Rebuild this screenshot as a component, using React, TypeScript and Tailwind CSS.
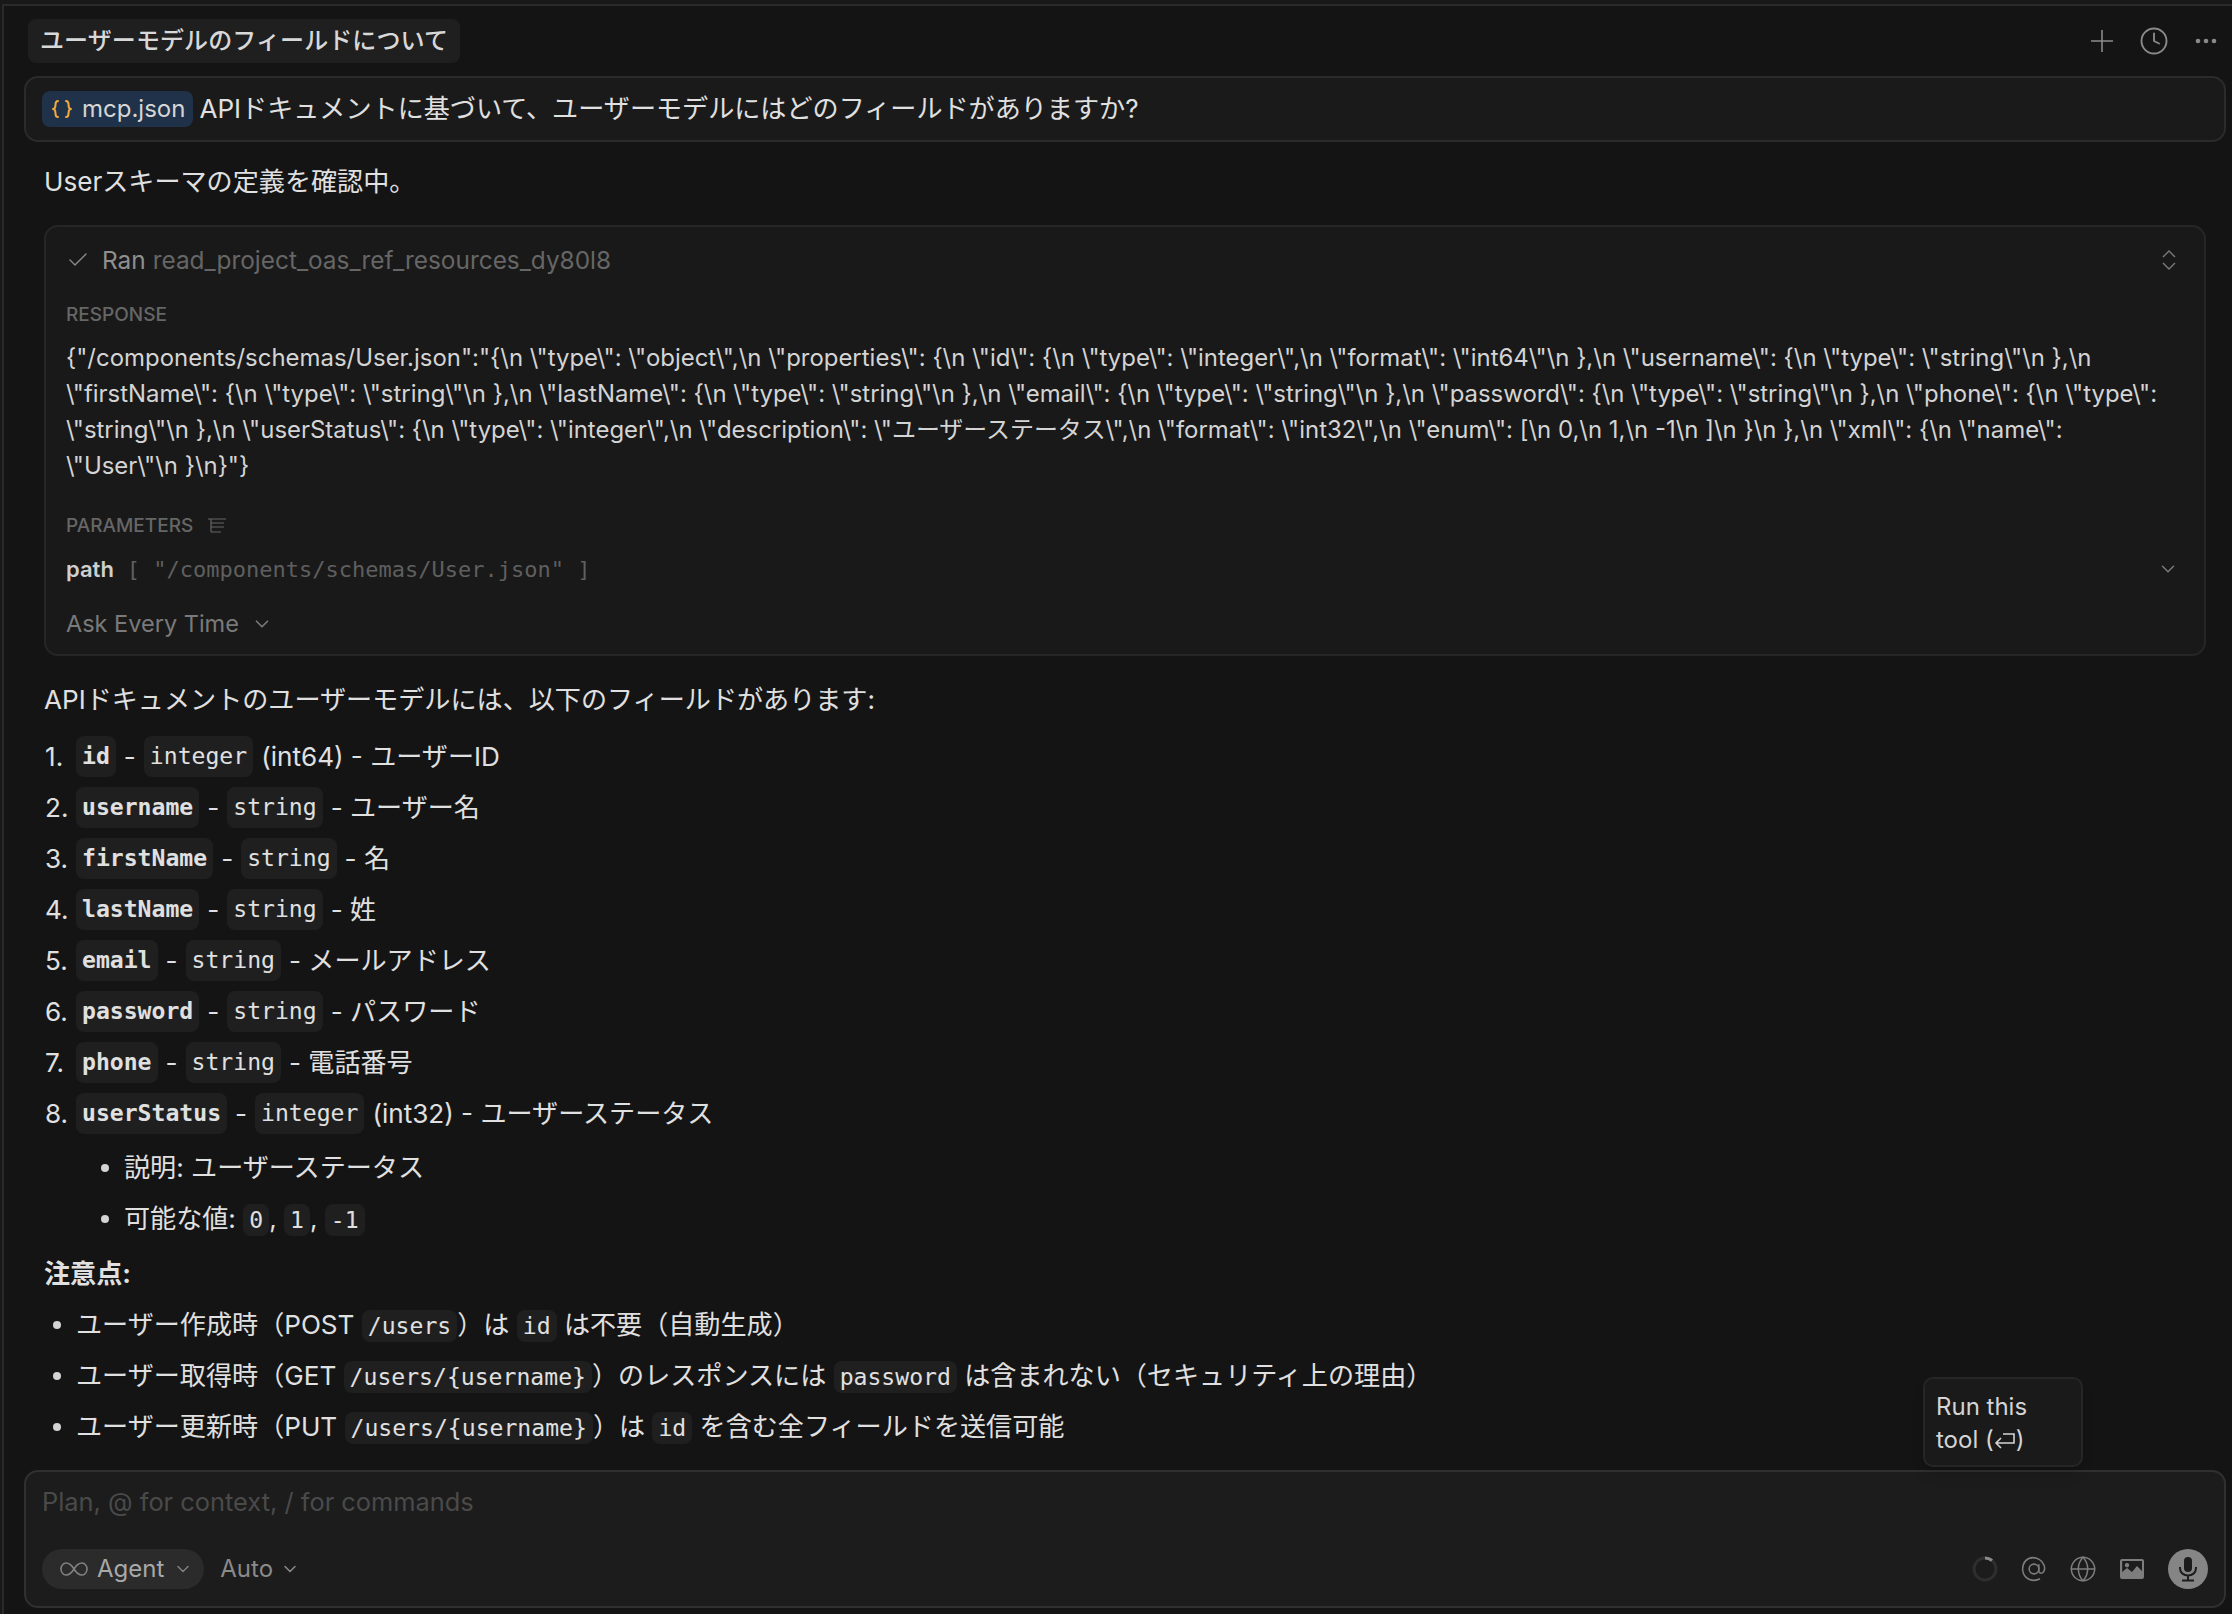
import { Check, ChevronDown, Clock, Globe } from 'lucide-react';
import type { ReactNode } from 'react';

const sans = 'font-["Inter","Noto_Sans_CJK_JP",sans-serif]';

const Code = ({ children, bold }: { children: ReactNode; bold?: boolean }) => (
  <code
    className={`rounded-lg bg-[#1f1f1f] px-[6px] py-[3px] font-["DejaVu_Sans_Mono",monospace] text-[23.1px] ${
      bold ? 'font-bold' : 'font-normal'
    }`}
  >
    {children}
  </code>
);

const fields = [
  { name: 'id', type: 'integer', rest: '(int64) - ユーザーID' },
  { name: 'username', type: 'string', rest: '- ユーザー名' },
  { name: 'firstName', type: 'string', rest: '- 名' },
  { name: 'lastName', type: 'string', rest: '- 姓' },
  { name: 'email', type: 'string', rest: '- メールアドレス' },
  { name: 'password', type: 'string', rest: '- パスワード' },
  { name: 'phone', type: 'string', rest: '- 電話番号' },
  { name: 'userStatus', type: 'integer', rest: '(int32) - ユーザーステータス' },
];

const responseText =
  '{"/components/schemas/User.json":"{\\n \\"type\\": \\"object\\",\\n \\"properties\\": {\\n \\"id\\": {\\n \\"type\\": \\"integer\\",\\n \\"format\\": \\"int64\\"\\n },\\n \\"username\\": {\\n \\"type\\": \\"string\\"\\n },\\n \\"firstName\\": {\\n \\"type\\": \\"string\\"\\n },\\n \\"lastName\\": {\\n \\"type\\": \\"string\\"\\n },\\n \\"email\\": {\\n \\"type\\": \\"string\\"\\n },\\n \\"password\\": {\\n \\"type\\": \\"string\\"\\n },\\n \\"phone\\": {\\n \\"type\\": \\"string\\"\\n },\\n \\"userStatus\\": {\\n \\"type\\": \\"integer\\",\\n \\"description\\": \\"ユーザーステータス\\",\\n \\"format\\": \\"int32\\",\\n \\"enum\\": [\\n 0,\\n 1,\\n -1\\n ]\\n }\\n },\\n \\"xml\\": {\\n \\"name\\": \\"User\\"\\n }\\n}"}';

const Bullet = ({ children }: { children: ReactNode }) => (
  <div className="flex h-[51px] items-center">
    <span className="ml-[9px] mr-[15px] h-[8px] w-[8px] rounded-full bg-[#d4d4d4]" />
    <span className="whitespace-pre">{children}</span>
  </div>
);

const App = () => {
  return (
    <div className={`relative h-[1614px] w-[2232px] overflow-hidden bg-[#181818] pl-[2px] pt-[4px] text-[26.1px] text-[#e0e0e0] ${sans}`}>
      <div className="flex h-[1610px] flex-col border-l-2 border-t-2 border-[#2a2a2a] bg-[#141414]">
        {/* top bar */}
        <div className="flex h-[70px] shrink-0 items-center justify-between pl-[24px] pr-[14px]">
          <div className="flex h-[44px] items-center rounded-lg bg-[#1f1f1f] px-[12px] text-[24px] font-medium tracking-[0.1px] text-[#d8d8d8]">
            ユーザーモデルのフィールドについて
          </div>
          <div className="flex items-center gap-[25px] text-[#8a8a8a]">
            <svg width="24" height="24" viewBox="0 0 24 24" fill="none" stroke="currentColor" strokeWidth="1.6">
              <path d="M1 12 H23 M12 1 V23" />
            </svg>
            <Clock size={30} strokeWidth={1.5} />
            <svg width="24" height="24" viewBox="0 0 24 24" fill="currentColor">
              <circle cx="4" cy="12" r="2.3" />
              <circle cx="12" cy="12" r="2.3" />
              <circle cx="20" cy="12" r="2.3" />
            </svg>
          </div>
        </div>

        {/* user message */}
        <div className="ml-[20px] mr-[6px] flex h-[66px] shrink-0 items-center rounded-[14px] border-2 border-[#2b2b2b] bg-[#1a1a1a] pl-[16px]">
          <span className="mr-[6px] flex h-[36px] items-center gap-[10px] rounded-lg bg-[#1f3249] pl-[10px] pr-[8px] text-[24px] text-[#d6d6d6]">
            <svg width="20" height="20" viewBox="0 0 20 20" fill="none" stroke="#f2a93b" strokeWidth="2" strokeLinecap="round">
              <path d="M6 2 C3.5 2 3.5 3.5 3.5 5.5 C3.5 8 3 9.5 1.5 10 C3 10.5 3.5 12 3.5 14.5 C3.5 16.5 3.5 18 6 18" />
              <path d="M14 2 C16.5 2 16.5 3.5 16.5 5.5 C16.5 8 17 9.5 18.5 10 C17 10.5 16.5 12 16.5 14.5 C16.5 16.5 16.5 18 14 18" />
            </svg>
            mcp.json
          </span>
          APIドキュメントに基づいて、ユーザーモデルにはどのフィールドがありますか?
        </div>

        <div className="ml-[40px] mr-[26px] flex min-h-0 flex-1 flex-col">
          <div className="mt-[20px] flex h-[40px] shrink-0 items-center">Userスキーマの定義を確認中。</div>

          {/* tool card */}
          <div className="mt-[23px] h-[431px] shrink-0 rounded-[14px] border-2 border-[#262626] bg-[#191919] pl-[20px] pr-[18px]">
            <div className="flex h-[66px] items-center text-[24.4px]">
              <Check size={24} strokeWidth={1.4} className="mr-[12px] text-[#8a8a8a]" />
              <span className="text-[#8f8f8f]">Ran</span>
              <span className="ml-[7px] text-[#666666]">read_project_oas_ref_resources_dy80l8</span>
              <svg width="18" height="24" viewBox="0 0 18 24" fill="none" stroke="#7a7a7a" strokeWidth="1.4" className="ml-auto mr-[8px]">
                <path d="M3 9 L9 3 L15 9" />
                <path d="M3 15 L9 21 L15 15" />
              </svg>
            </div>
            <div className="mt-[11px] text-[19px] leading-[22px] font-medium text-[#666666]">RESPONSE</div>
            <div className="mt-[14px] pr-[16px] text-[23.95px] leading-[36px] text-[#d4d4d4]">{responseText}</div>
            <div className="mt-[30px] flex h-[24px] items-center gap-[14px] text-[19px] font-medium text-[#666666]">
              PARAMETERS
              <svg width="20" height="20" viewBox="0 0 20 20" fill="none" stroke="#666666" strokeWidth="1.2">
                <path d="M1 3 H19 M4 7 H17 M4 11 H17 M4 16 H14 M4 3 V16" />
              </svg>
            </div>
            <div className="mt-[13px] flex h-[36px] items-center text-[22px]">
              <span className="font-semibold text-[#cfcfcf]">path</span>
              <span className='ml-[13px] font-["DejaVu_Sans_Mono",monospace] text-[22px] text-[#5f5f5f]'>
                [ "/components/schemas/User.json" ]
              </span>
              <ChevronDown size={22} strokeWidth={1.6} className="ml-auto mr-[7px] text-[#7a7a7a]" />
            </div>
            <div className="mt-[19px] flex h-[36px] items-center gap-[12px] text-[23.5px] text-[#7a7a7a]">
              Ask Every Time
              <ChevronDown size={22} strokeWidth={1.8} />
            </div>
          </div>

          {/* answer */}
          <div className="mt-[26px] flex h-[36px] shrink-0 items-center">APIドキュメントのユーザーモデルには、以下のフィールドがあります:</div>
          <div className="mt-[13px] flex flex-col">
            {fields.map((field, i) => (
              <div key={field.name} className="flex h-[51px] items-center whitespace-pre">
                <span className="w-[32px] pl-[1px]">{i + 1}.</span>
                <Code bold>{field.name}</Code>
                <span className="mx-[8px]">-</span>
                <Code>{field.type}</Code>
                <span className="ml-[8px]">{field.rest}</span>
              </div>
            ))}
          </div>
          <div className="ml-[48px] mt-[3px] flex flex-col">
            <Bullet>説明: ユーザーステータス</Bullet>
            <Bullet>
              可能な値: <Code>0</Code>, <Code>1</Code>, <Code>-1</Code>
            </Bullet>
          </div>
          <div className="mt-[10px] flex h-[40px] items-center font-bold">注意点:</div>
          <div className="mt-[5px] flex flex-col">
            <Bullet>
              ユーザー作成時（POST <Code>/users</Code>）は <Code>id</Code> は不要（自動生成）
            </Bullet>
            <Bullet>
              ユーザー取得時（GET <Code>/users/{'{username}'}</Code>）のレスポンスには <Code>password</Code> は含まれない（セキュリティ上の理由）
            </Bullet>
            <Bullet>
              ユーザー更新時（PUT <Code>/users/{'{username}'}</Code>）は <Code>id</Code> を含む全フィールドを送信可能
            </Bullet>
          </div>
        </div>

        {/* composer */}
        <div className="mb-[6px] ml-[20px] mr-[6px] mt-auto flex h-[138px] shrink-0 flex-col rounded-[14px] border-2 border-[#303030] bg-[#1c1c1c] px-[16px]">
          <div className="flex h-[60px] shrink-0 items-center text-[25.4px] text-[#4a4a4a]">Plan, @ for context, / for commands</div>
          <div className="mt-[17px] flex items-center text-[24px]">
            <div className="flex h-[40px] items-center gap-[9px] rounded-full bg-[#2b2b2b] pl-[18px] pr-[11px] text-[#a8a8a8]">
              <svg width="28" height="14" viewBox="0 0 28 14" fill="none" stroke="#808080" strokeWidth="1.6">
                <path d="M14 7 C11 2 8 1 6 1 C3 1 1 4 1 7 C1 10 3 13 6 13 C8 13 11 12 14 7 C17 2 20 1 22 1 C25 1 27 4 27 7 C27 10 25 13 22 13 C20 13 17 12 14 7 Z" />
              </svg>
              Agent
              <ChevronDown size={20} strokeWidth={1.8} className="text-[#808080]" />
            </div>
            <div className="ml-[16px] flex items-center gap-[7px] text-[#8a8a8a]">
              Auto
              <ChevronDown size={20} strokeWidth={1.8} />
            </div>
            <div className="ml-auto flex items-center gap-[23px] text-[#7d7d7d]">
              <svg width="26" height="26" viewBox="0 0 26 26" fill="none">
                <circle cx="13" cy="13" r="11" stroke="#2e2e2e" strokeWidth="3" />
                <path d="M13 2 A11 11 0 0 1 20 4.5" stroke="#8a8a8a" strokeWidth="3" />
              </svg>
              <svg width="26" height="26" viewBox="0 0 24 24" fill="none" stroke="currentColor" strokeWidth="1.4">
                <circle cx="12" cy="12" r="4.5" />
                <path d="M16.5 7.5 V13.5 C16.5 16 19 16.5 20.5 15 C22 13 22 10 21 8 C19 3 14 1.5 11 1.5 C5.5 1.5 1.5 6 1.5 12 C1.5 18 6 22.5 12 22.5 C14 22.5 16 22 17.5 21" />
              </svg>
              <Globe size={28} strokeWidth={1.3} className="-mx-[1px]" />
              <svg width="26" height="26" viewBox="0 0 26 26">
                <path
                  fill="currentColor"
                  fillRule="evenodd"
                  d="M3 3 H23 A2 2 0 0 1 25 5 V21 A2 2 0 0 1 23 23 H3 A2 2 0 0 1 1 21 V5 A2 2 0 0 1 3 3 Z M3.2 5 V16 L8 12 L13 16 L18 10 L23 15 V5 Z M8 7 A2.2 2.2 0 1 0 8.01 7 Z"
                />
              </svg>
              <div className="flex h-[40px] w-[40px] items-center justify-center rounded-full bg-[#858585]">
                <svg width="24" height="28" viewBox="0 0 24 28" fill="none" stroke="#1c1c1c" strokeWidth="2">
                  <rect x="8" y="2" width="8" height="15" rx="4" fill="#1c1c1c" stroke="none" />
                  <path d="M4 12 V13 C4 18 8 20.5 12 20.5 C16 20.5 20 18 20 13 V12 M12 20.5 V25 M6 25.5 H18" />
                </svg>
              </div>
            </div>
          </div>
        </div>
      </div>

      {/* tooltip */}
      <div className="absolute left-[1923px] top-[1377px] w-[160px] rounded-[10px] border-2 border-[#262626] bg-[#1a1a1a] pb-[9px] pl-[11px] pr-[4px] pt-[11px] text-[24px] leading-[33px] text-[#d4d4d4] shadow-lg">
        Run this
        <br />
        tool (
        <svg width="22" height="18" viewBox="0 0 22 18" fill="none" stroke="currentColor" strokeWidth="1.6" className="inline align-[-2px]">
          <path d="M9 2 H20 V11 H2 M7 6 L2 11 L7 16" />
        </svg>
        )
      </div>
    </div>
  );
};

export default App;
